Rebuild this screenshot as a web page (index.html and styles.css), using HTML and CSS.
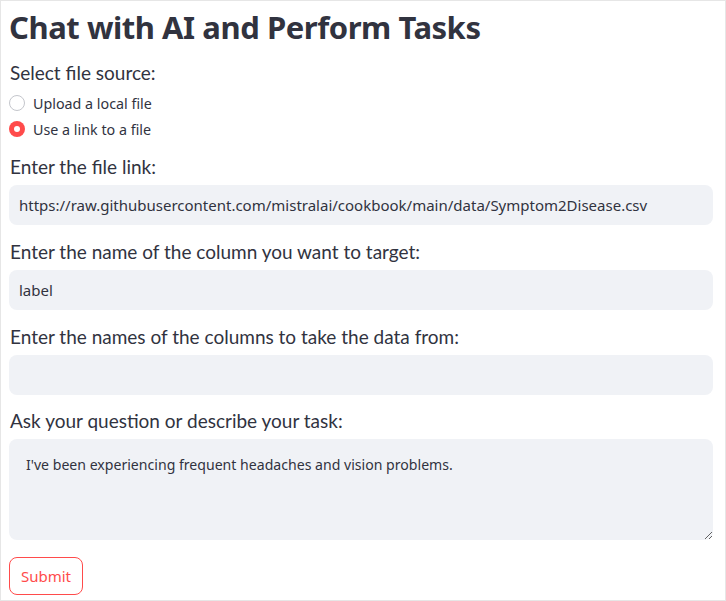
FILE: index.html
```html
<!DOCTYPE html>
<html>
<head>
<meta charset="utf-8">
<link rel="stylesheet" href="styles.css">
</head>
<body>
<div class="page">
  <h1 class="title">Chat with AI and Perform Tasks</h1>
  <div class="field">
    <div class="label first">Select file source:</div>
    <div class="radios">
      <div class="radio"><span class="dot"></span><span class="rtext">Upload a local file</span></div>
      <div class="radio"><span class="dot on"></span><span class="rtext">Use a link to a file</span></div>
    </div>
  </div>
  <div class="field">
    <div class="label">Enter the file link:</div>
    <input class="input" type="text" value="https://raw.githubusercontent.com/mistralai/cookbook/main/data/Symptom2Disease.csv">
  </div>
  <div class="field">
    <div class="label">Enter the name of the column you want to target:</div>
    <input class="input" type="text" value="label">
  </div>
  <div class="field">
    <div class="label">Enter the names of the columns to take the data from:</div>
    <input class="input" type="text" value="">
  </div>
  <div class="field">
    <div class="label last">Ask your question or describe your task:</div>
    <textarea class="area">I've been experiencing frequent headaches and vision problems.</textarea>
  </div>
  <button class="submit">Submit</button>
</div>
</body>
</html>
```
FILE: styles.css
```css
html, body {
  margin: 0;
  padding: 0;
  background: #fff;
}
.page {
  box-sizing: border-box;
  width: 726px;
  height: 601px;
  border: 1px solid #e6e6e6;
  padding: 0 12px 0 8px;
  display: flex;
  flex-direction: column;
  color: #31333f;
  font-family: "Noto Sans", sans-serif;
}
.title {
  margin: 4px 0 0 0;
  font-family: "Noto Sans", sans-serif;
  font-weight: 700;
  font-size: 31px;
  line-height: 44px;
  letter-spacing: -0.45px;
  color: #31333f;
}
.field {
  display: flex;
  flex-direction: column;
}
.label {
  font-family: "Lato", sans-serif;
  font-size: 19px;
  line-height: 24px;
  margin-top: 15px;
  margin-bottom: 6px;
  padding-left: 1px;
}
.label.first {
  margin-top: 12px;
  margin-bottom: 7px;
}
.label.last {
  margin-top: 14px;
}
.radios {
  display: flex;
  flex-direction: column;
  gap: 4px;
}
.radio {
  display: flex;
  align-items: center;
  height: 22px;
  font-size: 14.3px;
}
.dot {
  box-sizing: border-box;
  width: 16px;
  height: 16px;
  border-radius: 50%;
  border: 1px solid #c4c6cc;
  background: #fff;
  margin-right: 8px;
  position: relative;
}
.dot.on {
  border: none;
  background: #ff4b4b;
}
.dot.on::after {
  content: "";
  position: absolute;
  left: 5px;
  top: 5px;
  width: 6px;
  height: 6px;
  border-radius: 50%;
  background: #fff;
}
.rtext {
  color: #31333f;
}
.input {
  box-sizing: border-box;
  width: 704px;
  height: 40px;
  border: none;
  outline: none;
  border-radius: 8px;
  background: #f0f2f6;
  padding: 0 10px;
  font-family: "Noto Sans", sans-serif;
  font-size: 15px;
  color: #31333f;
}
.area {
  box-sizing: border-box;
  width: 704px;
  height: 101px;
  border: none;
  outline: none;
  border-radius: 8px;
  background: #f0f2f6;
  padding: 15px 17px;
  font-family: "Noto Sans", sans-serif;
  font-size: 14.1px;
  line-height: 22px;
  color: #31333f;
  resize: vertical;
}
.submit {
  align-self: flex-start;
  margin-top: 17px;
  box-sizing: border-box;
  width: 74px;
  height: 38px;
  border: 1px solid #ff4b4b;
  border-radius: 8px;
  background: #fff;
  color: #ff4b4b;
  font-family: "Noto Sans", sans-serif;
  font-size: 15px;
  padding: 0;
}
```
